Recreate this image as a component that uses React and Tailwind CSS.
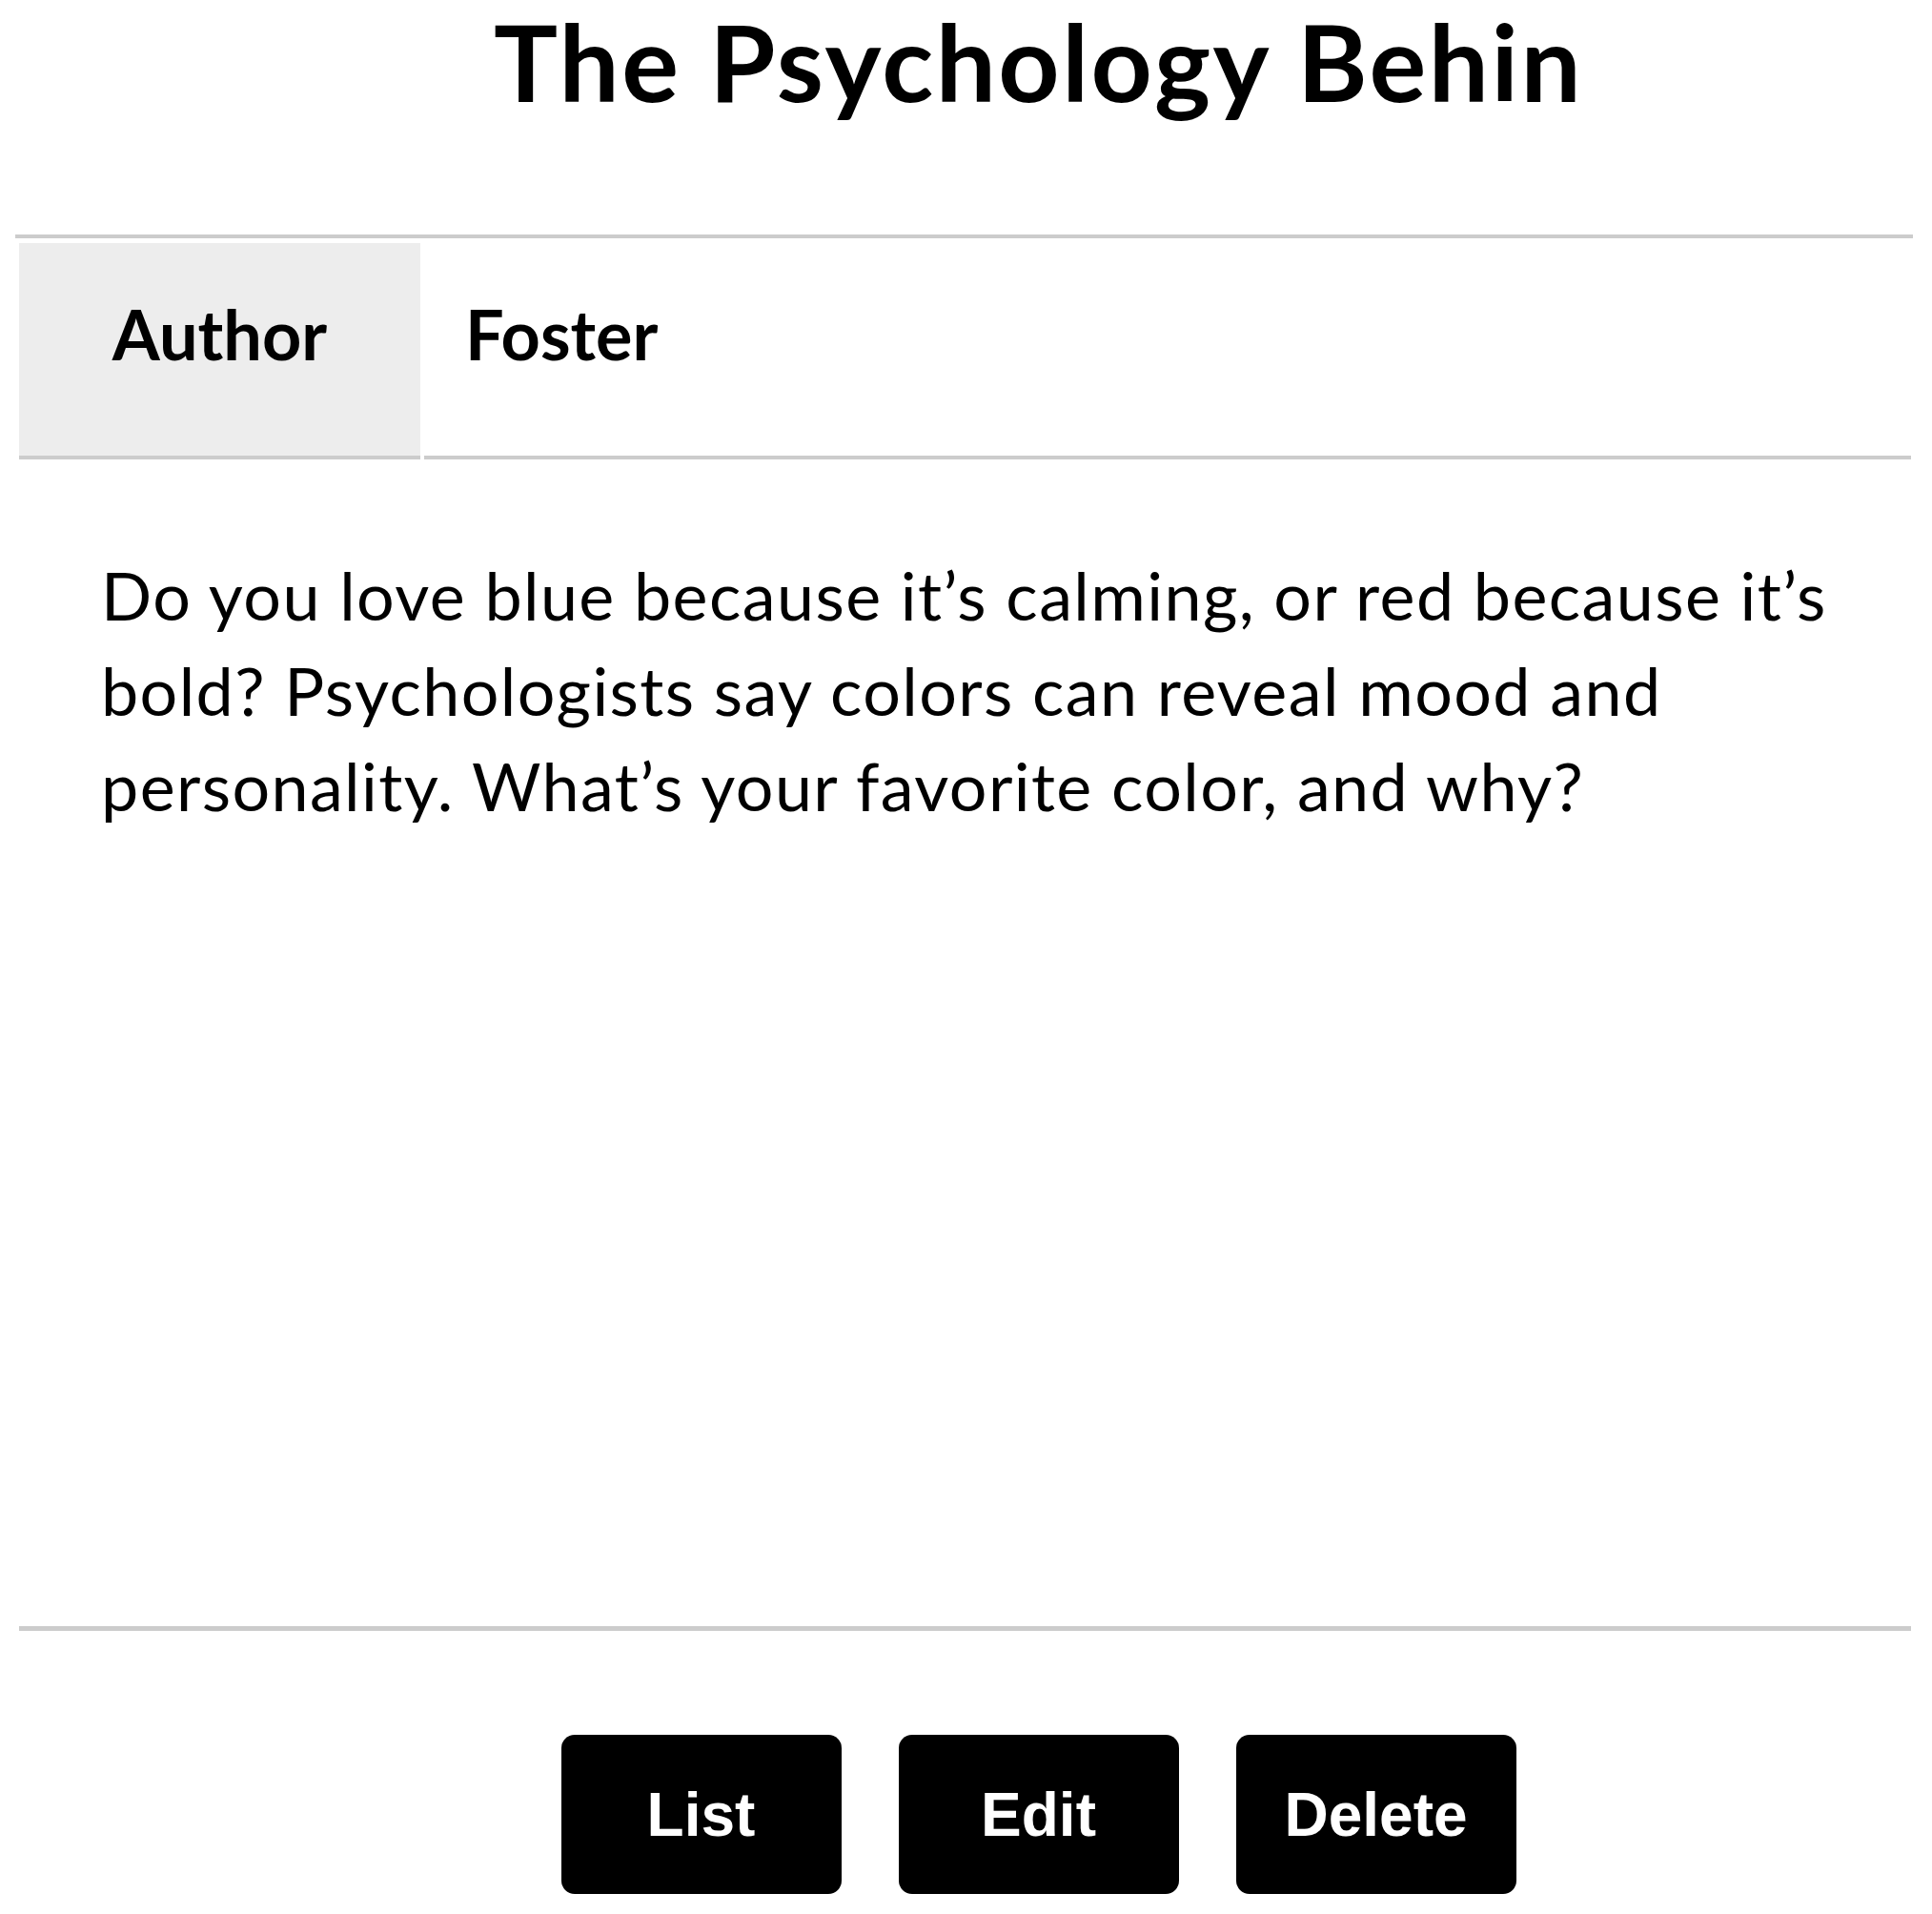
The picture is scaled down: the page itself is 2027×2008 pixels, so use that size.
import React from 'react';

const post = {
    title: 'The Psychology Behind Our Favorite Colors',
    author: 'Foster',
    body: 'Do you love blue because it’s calming, or red because it’s bold? Psychologists say colors can reveal mood and personality. What’s your favorite color, and why?'
};

const App = () => {
    return (
        <div className="w-[2027px] min-h-[2008px] bg-white text-black font-['Lato',sans-serif]">
            {/* 제목 */}
            <div className="h-[246px] pl-[152px] text-center">
                <h1 className="pt-[8px] text-[112px] leading-[112px] tracking-[2.5px] font-bold">
                    {post.title.substring(0, 20)}
                </h1>
            </div>

            <div className="ml-[16px] w-[1991px] h-[4px] bg-[#cccccc]" />

            {/* 작성자 */}
            <div className="ml-[20px] w-[1985px] mt-[5px] flex gap-[4px]">
                <div className="w-[421px] h-[227px] bg-[#ededed] border-b-4 border-[#cccccc] text-center pt-[41px] text-[72px] font-bold">
                    Author
                </div>
                <div className="flex-1 h-[227px] border-b-4 border-[#cccccc] pl-[43px] pt-[41px] text-[72px] font-bold">
                    {post.author}
                </div>
            </div>

            {/* 본문 */}
            <div className="ml-[20px] w-[1985px] h-[1224px] pt-[92px] pl-[86px] pr-[15px]">
                <p className="text-[70px] leading-[100px] tracking-[1.4px]">{post.body}</p>
            </div>

            <div className="ml-[20px] w-[1985px] h-[5px] bg-[#cccccc]" />

            {/* 버튼 */}
            <div className="pl-[152px] pt-[109px] flex justify-center gap-[60px]">
                {['List', 'Edit', 'Delete'].map((label) => (
                    <button
                        key={label}
                        className="w-[294px] h-[167px] rounded-[14px] bg-black text-white font-['Liberation_Sans',Arial,sans-serif] font-bold text-[64px]"
                    >
                        {label}
                    </button>
                ))}
            </div>
        </div>
    );
};

export default App;
